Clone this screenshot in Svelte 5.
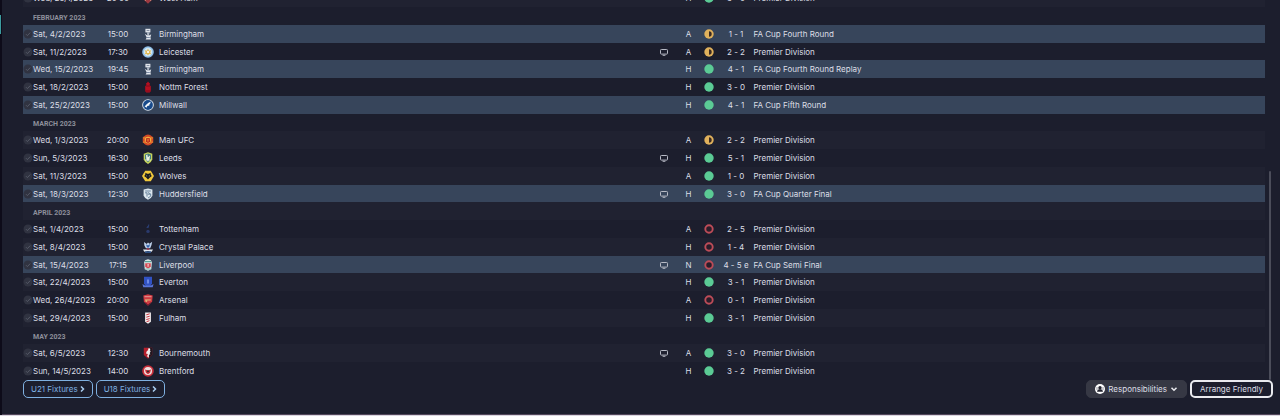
<script>
  const months = [
    { title: '', games: [['Wed, 25/1/2023', '20:00', 'westham', 'West Ham', '', 'H', 'win', '3 - 0', 'Premier Division']] },
    { title: 'FEBRUARY 2023', games: [
      ['Sat, 4/2/2023', '15:00', 'birmingham', 'Birmingham', '', 'A', 'draw', '1 - 1', 'FA Cup Fourth Round'],
      ['Sat, 11/2/2023', '17:30', 'leicester', 'Leicester', 'tv', 'A', 'draw', '2 - 2', 'Premier Division'],
      ['Wed, 15/2/2023', '19:45', 'birmingham', 'Birmingham', '', 'H', 'win', '4 - 1', 'FA Cup Fourth Round Replay'],
      ['Sat, 18/2/2023', '15:00', 'forest', 'Nottm Forest', '', 'H', 'win', '3 - 0', 'Premier Division'],
      ['Sat, 25/2/2023', '15:00', 'millwall', 'Millwall', '', 'H', 'win', '4 - 1', 'FA Cup Fifth Round'],
    ] },
    { title: 'MARCH 2023', games: [
      ['Wed, 1/3/2023', '20:00', 'united', 'Man UFC', '', 'A', 'draw', '2 - 2', 'Premier Division'],
      ['Sun, 5/3/2023', '16:30', 'leeds', 'Leeds', 'tv', 'H', 'win', '5 - 1', 'Premier Division'],
      ['Sat, 11/3/2023', '15:00', 'wolves', 'Wolves', '', 'A', 'win', '1 - 0', 'Premier Division'],
      ['Sat, 18/3/2023', '12:30', 'huddersfield', 'Huddersfield', 'tv', 'H', 'win', '3 - 0', 'FA Cup Quarter Final'],
    ] },
    { title: 'APRIL 2023', games: [
      ['Sat, 1/4/2023', '15:00', 'tottenham', 'Tottenham', '', 'A', 'loss', '2 - 5', 'Premier Division'],
      ['Sat, 8/4/2023', '15:00', 'palace', 'Crystal Palace', '', 'H', 'loss', '1 - 4', 'Premier Division'],
      ['Sat, 15/4/2023', '17:15', 'liverpool', 'Liverpool', 'tv', 'N', 'loss', '4 - 5 e', 'FA Cup Semi Final'],
      ['Sat, 22/4/2023', '15:00', 'everton', 'Everton', '', 'H', 'win', '3 - 1', 'Premier Division'],
      ['Wed, 26/4/2023', '20:00', 'arsenal', 'Arsenal', '', 'A', 'loss', '0 - 1', 'Premier Division'],
      ['Sat, 29/4/2023', '15:00', 'fulham', 'Fulham', '', 'H', 'win', '3 - 1', 'Premier Division'],
    ] },
    { title: 'MAY 2023', games: [
      ['Sat, 6/5/2023', '12:30', 'bournemouth', 'Bournemouth', 'tv', 'A', 'win', '3 - 0', 'Premier Division'],
      ['Sun, 14/5/2023', '14:00', 'brentford', 'Brentford', '', 'H', 'win', '3 - 2', 'Premier Division'],
    ] },
  ];
</script>

{#snippet crest(club)}
  <svg class="crest" viewBox="0 0 12 12" aria-hidden="true">
    {#if club === 'birmingham'}
      <path d="M3.4.8h5v3.6h-5z" fill="#dfe3ea" /><path d="M4.6 2h2.8v1H4.6z" fill="#8792a5" />
      <path d="M4.8 4.2h2.8l-.6 3H5.4z" fill="#aeb7c5" /><path d="M2.8 5.8 5 7.2h2.8l1.4-1-.8 3.4.6 1.8H3.6l1.2-2z" fill="#e3e7ee" />
      <path d="M4.6 9h3.2v.9H4.6z" fill="#7585a0" />
    {:else if club === 'leicester'}
      <circle cx="6" cy="6" r="5.8" fill="#8fbfe8" /><circle cx="6" cy="6" r="4.2" fill="#d3e7f2" />
      <path d="m6 2.5 1 2.2 2.3-.5L8.2 6.3l1 2L7 8l-1 1.6L4.9 8l-2.2.3 1-2-1.1-2.1 2.4.5z" fill="#e2ba55" /><circle cx="6" cy="6" r="1.1" fill="#fff" />
    {:else if club === 'forest'}
      <path d="M6 .4 7.2 2 8 2.3 7.6 4l1.2 1.2v5L7.7 11.4H4.3L3.2 10.2v-5L4.4 4 4 2.3 4.9 2z" fill="#b50f20" />
      <path d="M4 5h4M3.5 10h5" stroke="#740a19" stroke-width=".8" />
    {:else if club === 'millwall'}
      <circle cx="6" cy="6" r="5.8" fill="#e3ebf4" /><circle cx="6" cy="6" r="4.9" fill="#17498a" />
      <path d="M2.4 8.4c1.1-2.7 3.5-4.5 6.8-5.8L7.8 4.5l.9-.1-1.6 1.4.4.6-2.2.7-.7 2-.6-1.4z" fill="#f0f5fa" />
    {:else if club === 'united'}
      <circle cx="6" cy="6" r="5.4" fill="#d34a25" />
      <path d="M.8 3.8h2.6M8.6 3.8h2.6M.8 8.2h2.6M8.6 8.2h2.6" stroke="#e8842e" stroke-width="1.2" /><circle cx="6" cy="6.1" r="3.3" fill="#f4b13c" />
      <path d="M4.4 3.9h3.2l.7 3.8L6 9.1 3.7 7.7z" fill="#bc2825" /><path d="M5.5 4.7h1v2.8h-1z" fill="#f0a52b" />
    {:else if club === 'leeds'}
      <path d="M6 .2 10.3 1.8v5.7L8.8 10 6 12 3.2 10 1.7 7.5V1.8z" fill="#c6d45a" />
      <path d="M3 2.7 6 1.5l3 1.2v4.2L6 10.3 3 6.9z" fill="#477e81" /><path d="m4 3.3 1.4-.8.4 2.7 2.3-1.7-.6 3.8L6 9.3 4.4 7.4z" fill="#eef4e4" />
      <path d="M3.1 8h5.8" stroke="#eef4e4" stroke-width=".7" />
    {:else if club === 'wolves'}
      <path d="M3.2.7h5.6L12 6l-3.2 5.3H3.2L0 6z" fill="#f0c83b" />
      <path d="m3.5 2.8 1.6.9h1.8l1.6-.9.4 2.3 1 .9-2 1.5L6 9.5 4.1 7.5 2.1 6l1-.9z" fill="#171a20" />
      <path d="m3.9 5.3 1.4.7-.5.6zM8.1 5.3 6.7 6l.5.6z" fill="#f0d468" />
    {:else if club === 'huddersfield'}
      <path d="M6 .4 10.4 1.4v6.4L8.8 10 6 11.8 3.2 10 1.6 7.8V1.4z" fill="#dbe6ee" />
      <path d="M3.2 3h5.6M3 4.8h2v3.8M5.8 4.4 8.6 6M5.7 6.2h3v2L6 10" stroke="#607e99" stroke-width=".9" fill="none" />
    {:else if club === 'tottenham'}
      <path d="M6.6 1.2 7.6 2l-.8.7.2 1.6-1.2.8-1.6-.6 1.6-1.4z" fill="#2c4078" /><circle cx="6" cy="8.4" r="1.7" fill="#2a3a6c" />
    {:else if club === 'palace'}
      <path d="m2 1 2.7 2L6 1.6l1.5 1.2L10.2.8 9.5 4 8.2 7.2H3.9L2.4 4.5z" fill="#bfd1ea" /><path d="m4 3.2 2 1.4 2.2-1.7L7 6.6H5z" fill="#3364ac" />
      <path d="M1 8.4h10l-1.3 2.3L6 10l-3.7.7z" fill="#e4e9ef" /><path d="M3 10.5h6v1.2H3z" fill="#3768ae" /><path d="M4.8 7.3h2.4v1.4H4.8z" fill="#ad334b" />
    {:else if club === 'liverpool'}
      <path d="M3 1.2 6 .3l3 .9.8 2.2-.5 6.8L6 11.8l-3.3-1.6-.5-6.8z" fill="#e5efee" /><path d="M3 2.6h6" stroke="#59a497" stroke-width="1.4" />
      <path d="M3.2 4.2h5.6V8L6 9.6 3.2 8z" fill="#d34c55" /><path d="M5.5 5h1.2l-.3 3h-.7z" fill="#f8e1df" /><path d="M3.4 10h5.2" stroke="#59a497" stroke-width=".8" />
    {:else if club === 'everton'}
      <path d="M2 .8h8v6.8L8.5 9.7 6 11 3.5 9.7 2 7.6z" fill="#3152c4" /><path d="M5 4 6 3l1 1v3.6H5z" fill="#6f8ae4" />
      <path d="M.4 8 3 9.4h6L11.6 8l-.9 3.2H1.3z" fill="#5975d8" />
    {:else if club === 'arsenal'}
      <path d="M1.3 1.5 6 .3l4.7 1.2-.6 6.2L6 11.8 1.9 7.7z" fill="#cf3b42" /><path d="M2.5 2.7h7" stroke="#edc7be" stroke-width=".7" />
      <path d="M3 5.4h5.8v1.1H3z" fill="#dab57a" /><circle cx="4.3" cy="7" r="1" fill="#dab57a" /><path d="m3.5 8.7 2.5 2.4 2.5-2.4" stroke="#7f1730" fill="none" />
    {:else if club === 'fulham'}
      <path d="M3.1.4h5.8v9.4L6 11.8 3.1 9.8z" fill="#f3eeee" /><path d="m4.3 2.8 3.4-1M4.3 5.2l3.4-1M4.3 7.6l3.4-1M4.5 9.7l3-1" stroke="#c73240" stroke-width="1" />
    {:else if club === 'bournemouth'}
      <path d="M1.8.8h8.4v7.3L6 11.8 1.8 8z" fill="#b6202d" /><path d="M7 .8h3.2v7.3L7 10.9z" fill="#24171f" />
      <path d="M4.5 4.7c1.4-2.6 4-2 4.1-.2L7.7 6l.7 1.3-1.5.4v3L5 9.2l.9-2.1L4 6.4z" fill="#f0eced" /><circle cx="7.2" cy="2.3" r="1.1" fill="#fff" />
    {:else if club === 'westham'}
      <path d="M1.5 1h9v6.4L6 11.8 1.5 7.4z" fill="#9c3940" /><path d="m3 2 6 6.4M9 2 3 8.4" stroke="#e6b59b" stroke-width="1.2" />
    {:else}
      <circle cx="6" cy="6" r="5.8" fill="#c9303b" /><circle cx="6" cy="6" r="4" fill="#f1dfde" />
      <path d="M3 4.4 6 5.4l3-1-.9 3.4L6 9.2 3.9 7.8z" fill="#c9303b" /><path d="M4.9 5.5h2.2v1.7H4.9z" fill="#432a2a" />
    {/if}
  </svg>
{/snippet}

<div class="page">
  <div class="rail"><i class="active"></i></div>
  <main>
    <div class="list">
      <table>
        <colgroup>
          <col class="c-check" /><col class="c-date" /><col class="c-time" /><col class="c-crest" /><col />
          <col class="c-mid" /><col class="c-mid" /><col class="c-end" /><col class="c-score" /><col /><col class="c-end" />
        </colgroup>
        <tbody>
          {#each months as month}
            {#if month.title}
              <tr><td></td><th class="month" colspan="10" scope="rowgroup">{month.title}</th></tr>
            {/if}
            {#each month.games as [date, time, club, name, tv, venue, result, score, competition]}
              <tr class:cup={competition.startsWith('FA')}>
                <td>
                  <svg class="check" viewBox="0 0 10 10" aria-hidden="true"><circle cx="5" cy="5" r="4.5" /><path d="m3 5.2 1.4 1.4L7.2 3.6" /></svg>
                </td>
                <td>{date}</td>
                <td class="center">{time}</td>
                <td class="badge">{@render crest(club)}</td>
                <td>{name}</td>
                <td>
                  {#if tv}
                    <svg class="tv" viewBox="0 0 10 8" aria-hidden="true"><rect x="1.5" y="1.5" width="7" height="4.6" rx=".8" /><path d="M3.6 7.3h2.8" /></svg>
                  {/if}
                </td>
                <td class="center">{venue}</td>
                <td>
                  <svg class="result" viewBox="0 0 10 10" aria-hidden="true">
                    {#if result === 'win'}
                      <circle cx="5" cy="5" r="4.7" fill="#5bcb95" />
                    {:else if result === 'draw'}
                      <circle cx="5" cy="5" r="4.7" fill="#e0b15c" /><path d="M5 2.3a2.7 2.7 0 0 1 0 5.4z" fill="#3a2a22" />
                    {:else}
                      <circle cx="5" cy="5" r="3.7" fill="#2b1d2a" stroke="#bd4c58" stroke-width="1.9" />
                    {/if}
                  </svg>
                </td>
                <td class="center">{score}</td>
                <td colspan="2">{competition}</td>
              </tr>
            {/each}
          {/each}
        </tbody>
      </table>
      <div class="scrollbar"></div>
    </div>

    <footer>
      {#each ['U21 Fixtures', 'U18 Fixtures'] as label}
        <button class="blue">{label}<svg class="chevron" viewBox="0 0 5 8" aria-hidden="true"><path d="m1 1.5 2.5 2.5L1 6.5" /></svg></button>
      {/each}
      <button class="grey">
        <svg class="person" viewBox="0 0 10 10" aria-hidden="true">
          <circle cx="5" cy="5" r="5" fill="#fff" /><circle cx="5" cy="3.7" r="1.7" fill="#22232f" />
          <path d="M2 7.8c.3-2 1.5-2.6 3-2.6s2.7.6 3 2.6z" fill="#22232f" /><path d="M2 3v3M8 3v3" stroke="#777985" stroke-width=".8" />
        </svg>
        Responsibilities
        <svg class="down" viewBox="0 0 8 6" aria-hidden="true"><path d="m1.5 1.7 2.5 2.5 2.5-2.5" /></svg>
      </button>
      <button class="white">Arrange Friendly</button>
    </footer>
  </main>
</div>

<style>
  :global(body) { margin: 0; }
  .page {
    box-sizing: border-box;
    height: 100vh;
    display: flex;
    background: #1c1e2d;
    border-bottom: 1px solid #d9d5de;
    color: #dddfe6;
    font: 8px/16px Inter, "Liberation Sans", sans-serif;
  }
  .rail { width: 2px; background: #0d0b19; padding-top: 15px; }
  .active { display: block; width: 1px; height: 19px; background: #3c9c9f; }
  main {
    flex: 1;
    min-width: 0;
    display: flex;
    flex-direction: column;
    border-bottom: 1px solid #51465a;
  }
  .list {
    flex: 1;
    min-height: 0;
    display: flex;
    align-items: flex-end;
    gap: 4px;
    overflow: hidden;
    padding: 0 9px 0 21px;
  }
  table { flex: 1; width: 100%; table-layout: fixed; border-collapse: collapse; }
  .c-check { width: 10px; }
  .c-date { width: 70px; }
  .c-time { width: 30px; }
  .c-crest { width: 26px; }
  .c-mid { width: 24px; }
  .c-end { width: 18px; }
  .c-score { width: 35px; }
  tr { height: 18px; }
  tr:nth-child(4n) { height: 17px; }
  tr:nth-child(odd) { background: #202231; }
  tr.cup { background: #37455b; }
  td, th { padding: 0; white-space: nowrap; text-align: left; }
  .center { text-align: center; }
  .month { padding-top: 3px; color: #8d8f9b; font: 700 7px/14px Roboto, "Liberation Sans", sans-serif; }
  .badge { padding-left: 4px; }
  svg { display: block; margin: 0 auto; fill: none; }
  .crest { width: 12px; height: 12px; }
  .check { width: 10px; height: 10px; }
  .check circle { fill: #303341; }
  .check path { stroke: #555967; }
  .tv { width: 10px; height: 8px; stroke: #b7bac5; stroke-width: 1; }
  .result { width: 10px; height: 10px; }
  .scrollbar { width: 2px; height: 55%; background: #4b4d5a; border-radius: 1px; }

  footer { display: flex; gap: 3px; padding: 0 7px 16px 21px; }
  button {
    box-sizing: border-box;
    height: 18px;
    display: flex;
    align-items: center;
    gap: 2px;
    padding: 0 7px;
    border: 1px solid;
    border-radius: 5px;
    background: none;
    color: inherit;
    font: inherit;
    white-space: nowrap;
  }
  button svg { margin: 0; }
  .blue { color: #7fb0e0; }
  .grey { margin-left: auto; background: #363844; border-color: #363844; gap: 3px; padding: 0 8px; }
  .white { border: 2px solid #e9eaee; padding: 0 8px; }
  .chevron { width: 5px; height: 8px; stroke: #a9cdf0; stroke-width: 1.5; }
  .down { width: 8px; height: 6px; stroke: #e9eaee; stroke-width: 1.5; }
  .person { width: 10px; height: 10px; }
</style>
